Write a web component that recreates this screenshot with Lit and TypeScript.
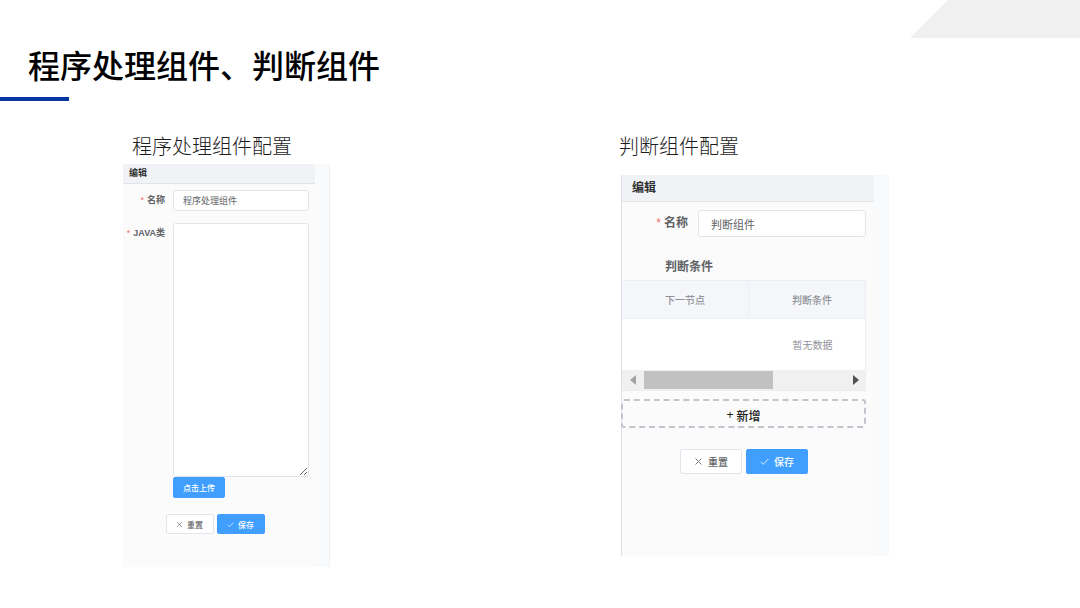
import { LitElement, html, css, svg } from "lit";
import { customElement, property } from "lit/decorators.js";

const crossIcon = svg`<path d="M2 2 L10 10 M10 2 L2 10" />`;
const checkIcon = svg`<path d="M1 6.5 L4.3 9.8 L11 2.8" />`;

@customElement("config-panel")
class ConfigPanel extends LitElement {
  @property() heading = "";

  static styles = css`
    :host {
      display: grid;
      grid-template-columns: 1fr var(--gutter);
      background: #f9fafc;
      box-sizing: border-box;
    }
    .body {
      min-width: 0;
      background: #fbfbfb;
    }
    .heading {
      margin: 0;
      box-sizing: border-box;
      height: var(--head-height);
      line-height: calc(var(--head-height) - 1px);
      padding-left: var(--head-pad);
      background: #f0f2f5;
      border-bottom: 1px solid #e1e4e9;
      color: #303133;
      font-size: var(--label-size);
      font-weight: 700;
    }
  `;

  render() {
    return html`
      <div class="body">
        <h3 class="heading">${this.heading}</h3>
        <slot></slot>
      </div>
    `;
  }
}

@customElement("app-root")
class AppRoot extends LitElement {
  static styles = css`
    :host {
      display: block;
      position: relative;
      min-height: 100vh;
      overflow: hidden;
      background: #fff;
      color: #000;
      font-family: "Liberation Sans", "Noto Sans CJK SC", sans-serif;
    }
    * {
      box-sizing: border-box;
    }
    .corner {
      position: absolute;
      top: 0;
      right: 0;
      width: 170px;
      height: 38px;
      fill: #f0f0f0;
    }
    .title {
      margin: 0;
      padding: 41px 0 0 28px;
      font-family: "Noto Sans CJK SC", sans-serif;
      font-size: 32px;
      line-height: 46px;
      font-weight: 500;
    }
    .rule {
      width: 69px;
      height: 4px;
      margin-top: 10px;
      background: #0437a0;
    }
    .columns {
      display: grid;
      grid-template-columns: 123fr 207fr 291fr 268fr 191fr;
      align-items: start;
      padding-top: 31px;
    }
    .process {
      grid-column: 2;
    }
    .decision {
      grid-column: 4;
    }
    .caption {
      margin: 0;
      color: #1c1c1c;
      font-family: "Noto Sans CJK SC", sans-serif;
      font-size: 20px;
      line-height: 28px;
      font-weight: 300;
      white-space: nowrap;
    }
    .process .caption {
      padding-left: 9px;
      margin-bottom: 4px;
    }
    .decision .caption {
      margin: 0 0 15px -2px;
    }
    .small {
      --gutter: 14px;
      --head-height: 20px;
      --head-pad: 6px;
      --label-size: 9px;
      min-height: 403px;
      border-right: 1px solid #eff0f4;
    }
    .large {
      --gutter: 15px;
      --head-height: 27px;
      --head-pad: 10px;
      --label-size: 12px;
      min-height: 381px;
      border-left: 1px solid #dfe3e8;
    }
    .field {
      display: grid;
      align-items: start;
    }
    .small .field {
      grid-template-columns: 42px 1fr;
      column-gap: 8px;
      padding-right: 6px;
    }
    .large .field {
      grid-template-columns: 66px 1fr;
      column-gap: 10px;
      padding: 8px 8px 0 0;
    }
    .small .name {
      padding-top: 6px;
      margin-bottom: 12px;
    }
    .label {
      color: #606266;
      font-size: var(--label-size);
      font-weight: 700;
      text-align: right;
      white-space: nowrap;
    }
    .small .label {
      line-height: 21px;
    }
    .large .label {
      line-height: 27px;
    }
    .star {
      color: #f56c6c;
      font-weight: 400;
      margin-right: 3px;
    }
    .input {
      display: block;
      width: 100%;
      min-width: 0;
      margin: 0;
      border: 1px solid #e2e5ec;
      border-radius: 3px;
      background: #fff;
      color: #606266;
      font-family: inherit;
      outline: none;
    }
    .small .input {
      height: 21px;
      padding: 0 9px;
      font-size: 9px;
    }
    .large .input {
      height: 27px;
      padding: 0 12px;
      font-size: 11px;
    }
    .small .area {
      height: 254px;
      padding: 4px 9px;
      resize: vertical;
    }
    .button {
      display: inline-flex;
      align-items: center;
      justify-content: center;
      margin: 0;
      padding: 0;
      border: 1px solid #e2e5ec;
      border-radius: 2px;
      background: #fff;
      color: #606266;
      font-family: inherit;
      font-weight: 500;
      white-space: nowrap;
    }
    .primary {
      border-color: #409eff;
      background: #409eff;
      color: #fff;
    }
    .small .button {
      width: 48px;
      height: 20px;
      gap: 4px;
      font-size: 8px;
    }
    .large .button {
      width: 62px;
      height: 25px;
      gap: 5px;
      font-size: 10px;
    }
    .small .upload {
      display: flex;
      width: 52px;
      height: 21px;
      margin-left: 50px;
    }
    .icon {
      fill: none;
      stroke: currentColor;
      stroke-width: 1.3;
      opacity: 0.85;
    }
    .small .icon {
      width: 7px;
      height: 7px;
    }
    .large .icon {
      width: 9px;
      height: 9px;
    }
    .actions {
      display: flex;
      justify-content: center;
    }
    .small .actions {
      gap: 3px;
      padding: 16px 8px 0 0;
    }
    .large .actions {
      gap: 4px;
      padding: 21px 8px 0 0;
    }
    .conditions {
      margin: 0;
      padding: 20px 0 3px 43px;
      color: #606266;
      font-size: 12px;
      line-height: 20px;
      font-weight: 700;
    }
    .viewport {
      margin-right: 8px;
      overflow: hidden;
      border-right: 1px solid #ebeef5;
    }
    .table {
      width: 381px;
      table-layout: fixed;
      border-collapse: separate;
      border-spacing: 0;
      color: #909399;
      font-size: 10px;
      text-align: center;
    }
    .table th {
      height: 39px;
      padding: 0;
      background: #f4f6fa;
      border: 1px solid #ebeef5;
      border-left: 0;
      font-weight: 500;
    }
    .table td {
      height: 51px;
      padding: 0;
      background: #fff;
    }
    .scroll {
      display: grid;
      grid-template-columns: 22px 1fr 20px;
      align-items: center;
      height: 21px;
      margin-right: 8px;
      background: #f0f0f0;
      border-bottom: 1px solid #ebeef5;
    }
    .thumb {
      width: 64%;
      height: 18px;
      background: #c1c1c1;
    }
    .arrow {
      width: 6px;
      height: 10px;
      justify-self: center;
      fill: #505050;
    }
    .dim {
      fill: #a3a3a3;
    }
    .large .add {
      display: flex;
      width: calc(100% - 7px);
      height: 29px;
      margin: 8px 0 0 -1px;
      padding-top: 3px;
      border: 2px dashed #c4c4d0;
      border-radius: 3px;
      background: transparent;
      color: #1c1c1c;
      font-size: 12px;
      gap: 3px;
    }
  `;

  private actions() {
    return html`
      <div class="actions">
        <button class="button" type="button">
          <svg class="icon" viewBox="0 0 12 12" aria-hidden="true">${crossIcon}</svg>重置
        </button>
        <button class="button primary" type="button">
          <svg class="icon" viewBox="0 0 12 12" aria-hidden="true">${checkIcon}</svg>保存
        </button>
      </div>
    `;
  }

  render() {
    return html`
      <svg class="corner" viewBox="0 0 170 38" aria-hidden="true">
        <path d="M38 0H170V38H0Z" />
      </svg>
      <h1 class="title">程序处理组件、判断组件</h1>
      <div class="rule"></div>
      <main class="columns">
        <section class="process">
          <h2 class="caption">程序处理组件配置</h2>
          <config-panel class="small" heading="编辑">
            <div class="field name">
              <label class="label" for="process-name"><span class="star">*</span>名称</label>
              <input class="input" id="process-name" .value=${"程序处理组件"} />
            </div>
            <div class="field">
              <label class="label" for="java"><span class="star">*</span>JAVA类</label>
              <textarea class="input area" id="java"></textarea>
            </div>
            <button class="button primary upload" type="button">点击上传</button>
            ${this.actions()}
          </config-panel>
        </section>
        <section class="decision">
          <h2 class="caption">判断组件配置</h2>
          <config-panel class="large" heading="编辑">
            <div class="field">
              <label class="label" for="decision-name"><span class="star">*</span>名称</label>
              <input class="input" id="decision-name" .value=${"判断组件"} />
            </div>
            <h4 class="conditions">判断条件</h4>
            <div class="viewport">
              <table class="table">
                <thead>
                  <tr><th>下一节点</th><th>判断条件</th><th></th></tr>
                </thead>
                <tbody>
                  <tr><td colspan="3">暂无数据</td></tr>
                </tbody>
              </table>
            </div>
            <div class="scroll">
              <svg class="arrow dim" viewBox="0 0 6 10" aria-hidden="true"><path d="M6 0V10L0 5Z" /></svg>
              <div class="thumb"></div>
              <svg class="arrow" viewBox="0 0 6 10" aria-hidden="true"><path d="M0 0V10L6 5Z" /></svg>
            </div>
            <button class="button add" type="button"><span>+</span>新增</button>
            ${this.actions()}
          </config-panel>
        </section>
      </main>
    `;
  }
}
